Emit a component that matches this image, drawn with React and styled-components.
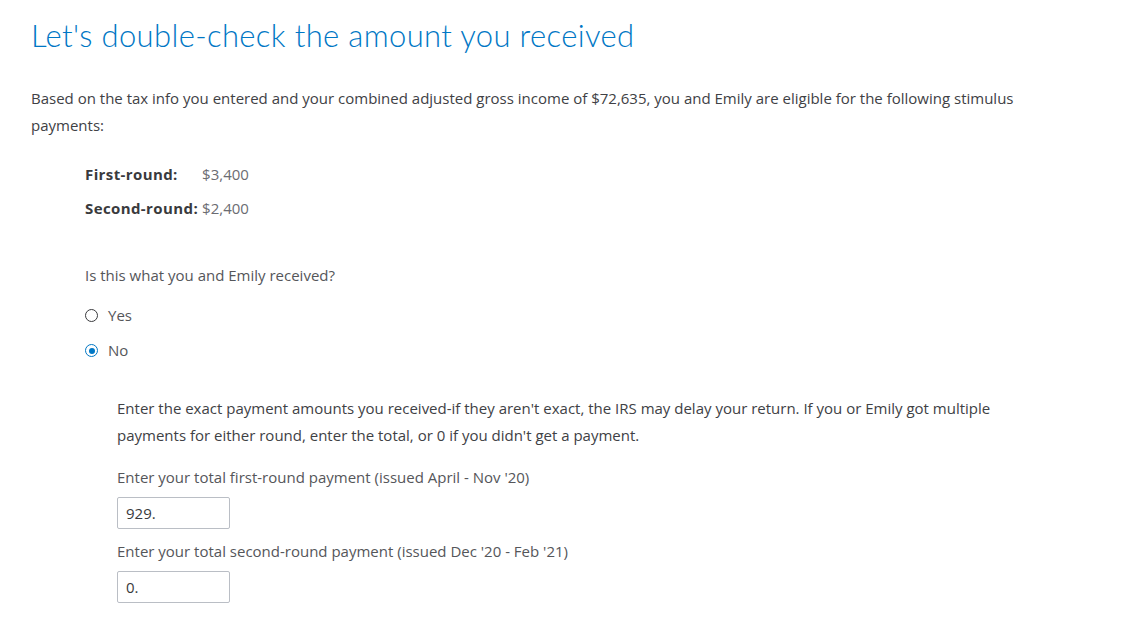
import React from "react";
import styled, { createGlobalStyle } from "styled-components";

const GlobalStyle = createGlobalStyle`
    body {
        margin: 0;
        background: #fff;
        font-family: "Open Sans", "Noto Sans", sans-serif;
        color: #393a3d;
    }
`;

const amounts = [
    { label: "First-round:", value: "$3,400" },
    { label: "Second-round:", value: "$2,400" },
];

function App() {
    return (
        <Page>
            <GlobalStyle />
            <Title>Let's double-check the amount you received</Title>
            <Intro>
                Based on the tax info you entered and your combined adjusted gross
                income of $72,635, you and Emily are eligible for the following
                stimulus payments:
            </Intro>
            <Amounts>
                {amounts.map((a) => (
                    <React.Fragment key={a.label}>
                        <AmountLabel>{a.label}</AmountLabel>
                        <AmountValue>{a.value}</AmountValue>
                    </React.Fragment>
                ))}
            </Amounts>
            <Question>Is this what you and Emily received?</Question>
            <Radios>
                <RadioRow>
                    <Radio />
                    <span>Yes</span>
                </RadioRow>
                <RadioRow>
                    <Radio checked />
                    <span>No</span>
                </RadioRow>
            </Radios>
            <Details>
                <Help>
                    Enter the exact payment amounts you received-if they aren't exact,
                    the IRS may delay your return. If you or Emily got multiple
                    payments for either round, enter the total, or 0 if you didn't get
                    a payment.
                </Help>
                <FieldLabel>Enter your total first-round payment (issued April - Nov '20)</FieldLabel>
                <Input defaultValue="929." />
                <FieldLabel>Enter your total second-round payment (issued Dec '20 - Feb '21)</FieldLabel>
                <Input defaultValue="0." />
            </Details>
        </Page>
    );
}

export default App;

const Page = styled.div`
    padding: 17px 0 0 31px;
`;

const Title = styled.h1`
    margin: 0;
    font-family: Lato, sans-serif;
    font-size: 31px;
    font-weight: 300;
    color: #0077c5;
    letter-spacing: 0.35px;
    line-height: 36px;
`;

const Intro = styled.p`
    margin: 32px 0 0;
    width: 1045px;
    font-size: 15px;
    line-height: 27px;
    color: #404145;
`;

const Amounts = styled.div`
    display: grid;
    grid-template-columns: auto auto;
    justify-content: start;
    column-gap: 4px;
    row-gap: 13px;
    margin: 25px 0 0 54px;
    font-size: 15px;
    line-height: 21px;
`;

const AmountLabel = styled.div`
    font-weight: 700;
    color: #393a3d;
    letter-spacing: 0.4px;
`;

const AmountValue = styled.div`
    color: #6b6c72;
`;

const Question = styled.div`
    margin: 46px 0 0 54px;
    font-size: 15px;
    line-height: 21px;
    color: #55565a;
`;

const Radios = styled.div`
    display: flex;
    flex-direction: column;
    gap: 14px;
    margin: 19px 0 0 54px;
`;

const RadioRow = styled.label`
    display: flex;
    align-items: center;
    gap: 10px;
    font-size: 15px;
    line-height: 21px;
    color: #55565a;
`;

const Radio = styled.span`
    box-sizing: border-box;
    width: 13px;
    height: 13px;
    border-radius: 50%;
    border: 1.5px solid ${(p) => (p.checked ? "#0077c5" : "#393a3d")};
    display: flex;
    align-items: center;
    justify-content: center;
    &::after {
        content: "";
        width: 6px;
        height: 6px;
        border-radius: 50%;
        background: ${(p) => (p.checked ? "#0077c5" : "transparent")};
    }
`;

const Details = styled.div`
    margin: 34px 0 0 86px;
    display: flex;
    flex-direction: column;
    align-items: flex-start;
`;

const Help = styled.p`
    margin: 0;
    width: 905px;
    font-size: 15px;
    line-height: 27px;
    color: #404145;
`;

const FieldLabel = styled.div`
    margin-top: 18px;
    font-size: 15px;
    line-height: 21px;
    color: #55565a;
    & + input + & {
        margin-top: 12px;
    }
`;

const Input = styled.input`
    box-sizing: border-box;
    margin-top: 9px;
    width: 113px;
    height: 32px;
    padding: 0 8px;
    border: 1px solid #babec5;
    border-radius: 2px;
    font-family: inherit;
    font-size: 15px;
    color: #393a3d;
    outline: none;
`;
